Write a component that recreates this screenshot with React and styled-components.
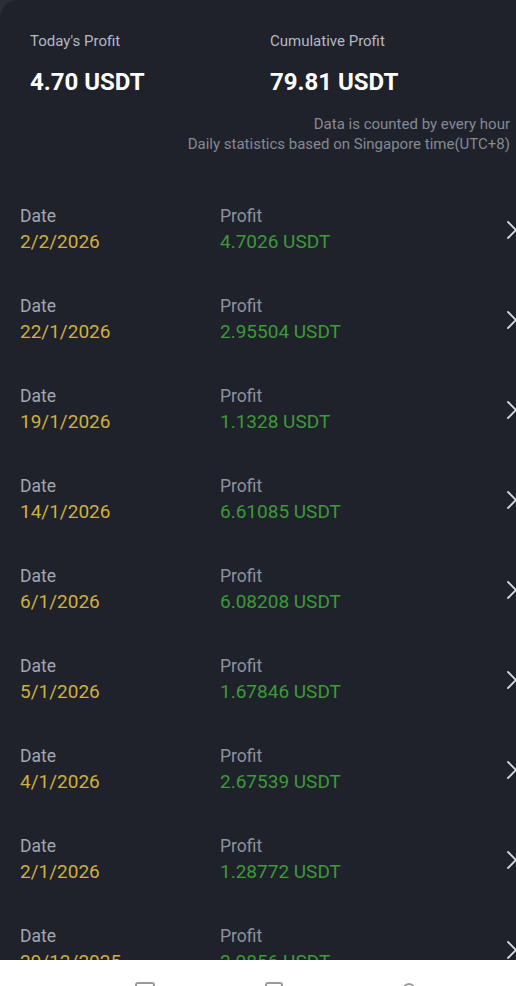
import React from 'react';
import styled, { createGlobalStyle } from 'styled-components';

const GlobalStyle = createGlobalStyle`
  html, body {
    margin: 0;
    padding: 0;
    background: #2b2e37;
    font-family: Roboto, "Liberation Sans", sans-serif;
  }
  * { box-sizing: border-box; }
`

const Screen = styled.div`
  width: 516px;
  height: 986px;
  overflow: hidden;
  display: flex;
  flex-direction: column;
`

const Panel = styled.div`
  height: 960px;
  overflow: hidden;
  background: #1f222b;
  border-top-left-radius: 18px;
`

const Summary = styled.div`
  padding: 31px 6px 0 30px;
`

const StatRow = styled.div`
  display: grid;
  grid-template-columns: 240px 1fr;
`

const Stat = styled.div`
  display: flex;
  flex-direction: column;
  gap: 16px;
`

const StatLabel = styled.div`
  font-size: 15px;
  line-height: 20px;
  color: #b4b8c2;
`

const StatValue = styled.div`
  font-size: 24px;
  line-height: 30px;
  font-weight: 700;
  color: #ffffff;
`

const Notes = styled.div`
  margin-top: 17px;
  text-align: right;
  font-size: 15px;
  line-height: 20px;
  color: #858994;
`

const List = styled.div`
  margin-top: 51px;
`

const Row = styled.div`
  display: grid;
  grid-template-columns: 200px 1fr 14px;
  height: 90px;
  padding-left: 20px;
  margin-right: -4px;
`

const Cell = styled.div`
  display: flex;
  flex-direction: column;
`

const Label = styled.div`
  font-size: 17.5px;
  line-height: 22px;
  color: ${p => p.$dim ? '#8e929c' : '#a3a7b1'};
`

const Value = styled.div`
  font-size: 19px;
  line-height: 30px;
  color: ${p => p.$tone === 'date' ? '#cfb03e' : '#3c9a37'};
`

const Chevron = styled.svg`
  margin-top: 15px;
  width: 12px;
  height: 20px;
`

const NavBar = styled.div`
  height: 26px;
  background: #ffffff;
  position: relative;
  overflow: hidden;
`

const NavIcon = styled.svg`
  position: absolute;
  top: 22px;
  width: 22px;
  height: 22px;
`

const rows = [
  ['2/2/2026', '4.7026 USDT'],
  ['22/1/2026', '2.95504 USDT'],
  ['19/1/2026', '1.1328 USDT'],
  ['14/1/2026', '6.61085 USDT'],
  ['6/1/2026', '6.08208 USDT'],
  ['5/1/2026', '1.67846 USDT'],
  ['4/1/2026', '2.67539 USDT'],
  ['2/1/2026', '1.28772 USDT'],
  ['29/12/2025', '2.9856 USDT'],
];

const App = () => {
  return (
    <Screen>
      <GlobalStyle />
      <Panel>
        <Summary>
          <StatRow>
            <Stat>
              <StatLabel>Today's Profit</StatLabel>
              <StatValue>4.70 USDT</StatValue>
            </Stat>
            <Stat>
              <StatLabel>Cumulative Profit</StatLabel>
              <StatValue>79.81 USDT</StatValue>
            </Stat>
          </StatRow>
          <Notes>
            <div>Data is counted by every hour</div>
            <div>Daily statistics based on Singapore time(UTC+8)</div>
          </Notes>
        </Summary>
        <List>
          {rows.map(([date, profit]) => (
            <Row key={date}>
              <Cell>
                <Label>Date</Label>
                <Value $tone="date">{date}</Value>
              </Cell>
              <Cell>
                <Label $dim>Profit</Label>
                <Value $tone="profit">{profit}</Value>
              </Cell>
              <Chevron viewBox="0 0 12 20">
                <path d="M2 2 L10 10 L2 18" fill="none" stroke="#d6d9e0" strokeWidth="1.8" strokeLinecap="round" strokeLinejoin="round" />
              </Chevron>
            </Row>
          ))}
        </List>
      </Panel>
      <NavBar>
        <NavIcon viewBox="0 0 22 22" style={{ left: 134 }}>
          <rect x="2" y="1" width="18" height="18" rx="2" fill="none" stroke="#9a9a9a" strokeWidth="2" />
        </NavIcon>
        <NavIcon viewBox="0 0 22 22" style={{ left: 264 }}>
          <rect x="2" y="1" width="16" height="18" rx="2" fill="none" stroke="#9a9a9a" strokeWidth="2" />
        </NavIcon>
        <NavIcon viewBox="0 0 22 22" style={{ left: 398 }}>
          <circle cx="11" cy="7" r="5" fill="none" stroke="#9a9a9a" strokeWidth="2" />
        </NavIcon>
      </NavBar>
    </Screen>
  );
};

export default App;
